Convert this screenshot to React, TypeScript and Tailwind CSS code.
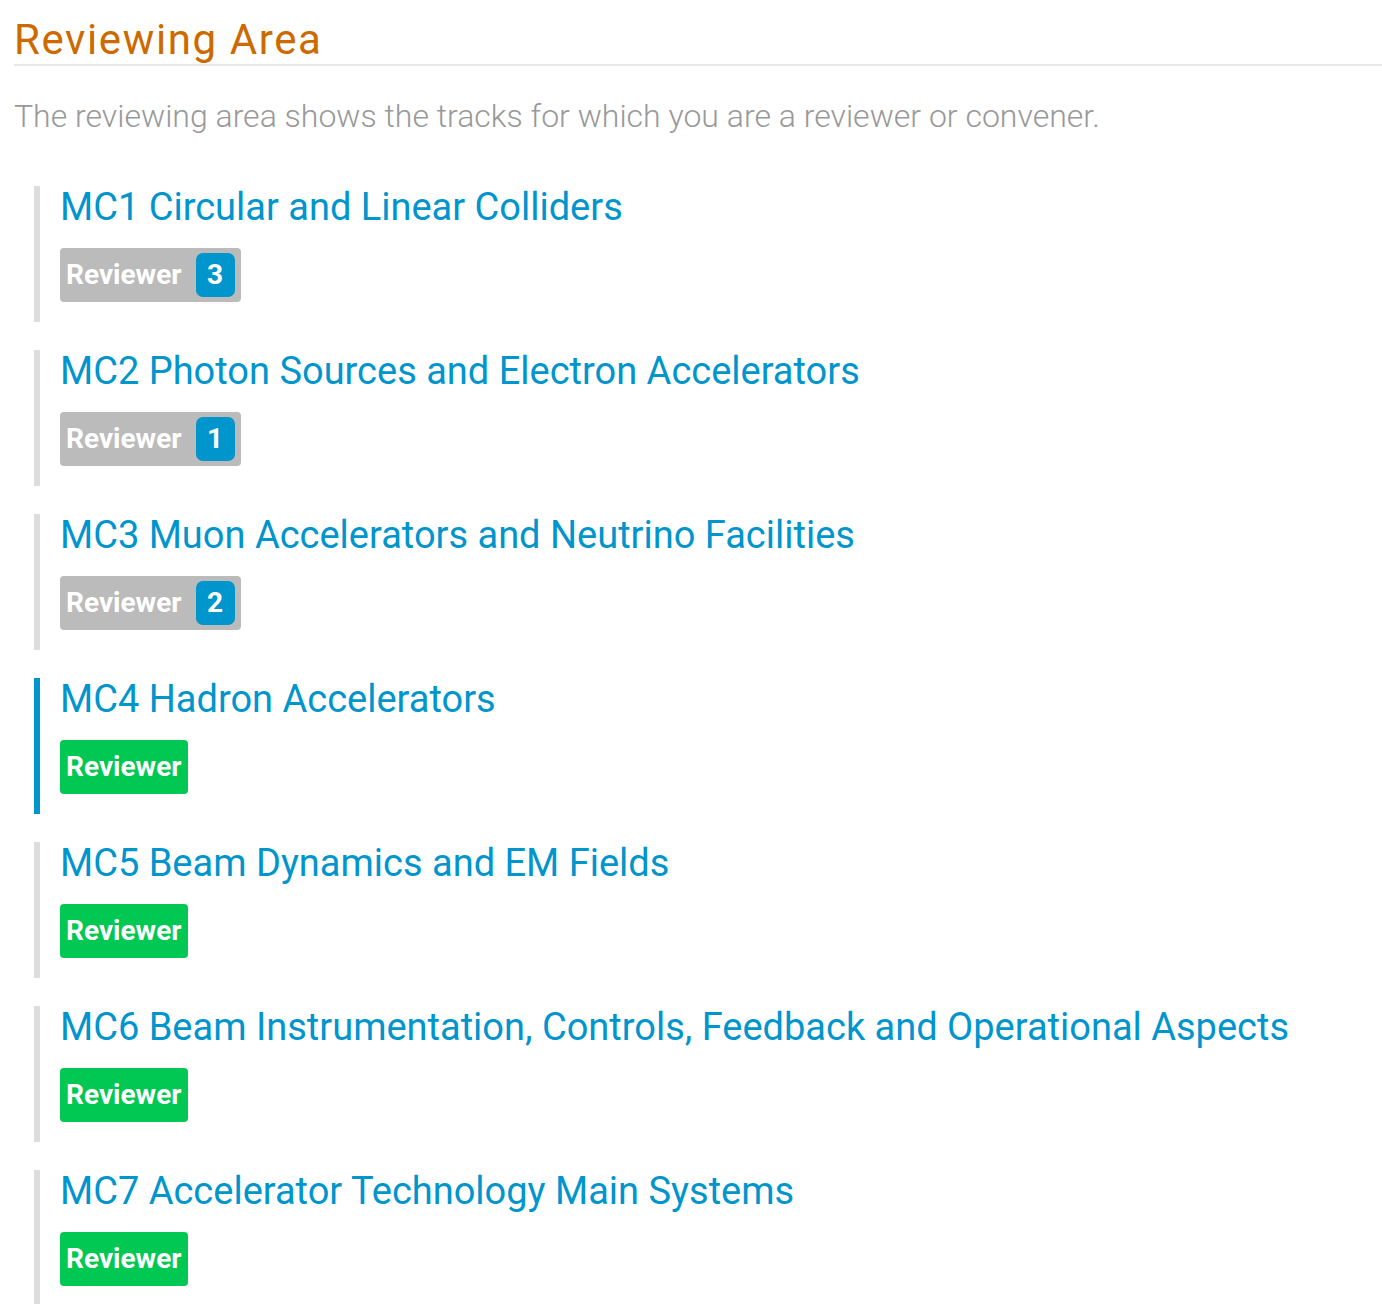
const tracks: { title: string; count?: number; active?: boolean }[] = [
  { title: "MC1 Circular and Linear Colliders", count: 3 },
  { title: "MC2 Photon Sources and Electron Accelerators", count: 1 },
  { title: "MC3 Muon Accelerators and Neutrino Facilities", count: 2 },
  { title: "MC4 Hadron Accelerators", active: true },
  { title: "MC5 Beam Dynamics and EM Fields" },
  { title: "MC6 Beam Instrumentation, Controls, Feedback and Operational Aspects" },
  { title: "MC7 Accelerator Technology Main Systems" },
];

export default function App() {
  return (
    <div className="min-h-screen bg-white pl-[14px] font-['Roboto',sans-serif]">
      <h2 className="border-b-2 border-[#e8e8e8] pt-[16px] pb-[1px] text-[42px] leading-[47px] font-normal tracking-[1.6px] text-[#cc6a00]">
        Reviewing Area
      </h2>
      <p className="mt-[32px] text-[32px] leading-[36px] font-light text-[#999999]">
        The reviewing area shows the tracks for which you are a reviewer or convener.
      </p>
      <ul className="mt-[52px] flex flex-col gap-[28px] pl-[20px]">
        {tracks.map((track) => (
          <li
            key={track.title}
            className={`h-[136px] border-l-[6px] pl-[20px] ${track.active ? "border-[#0095cc]" : "border-[#dddddd]"}`}
          >
            <a className="block text-[38px] leading-[42px] text-[#0095cc]">{track.title}</a>
            {track.count !== undefined ? (
              <span className="mt-[20px] inline-flex h-[54px] items-center gap-[14px] rounded-[4px] bg-[#bbbbbb] px-[6px] text-[28px] font-bold text-white">
                Reviewer
                <span className="flex h-[44px] w-[39px] items-center justify-center rounded-[7px] bg-[#0095cc]">
                  {track.count}
                </span>
              </span>
            ) : (
              <span className="mt-[20px] inline-flex h-[54px] items-center rounded-[4px] bg-[#00c853] px-[6px] text-[28px] font-bold text-white">
                Reviewer
              </span>
            )}
          </li>
        ))}
      </ul>
    </div>
  );
}
